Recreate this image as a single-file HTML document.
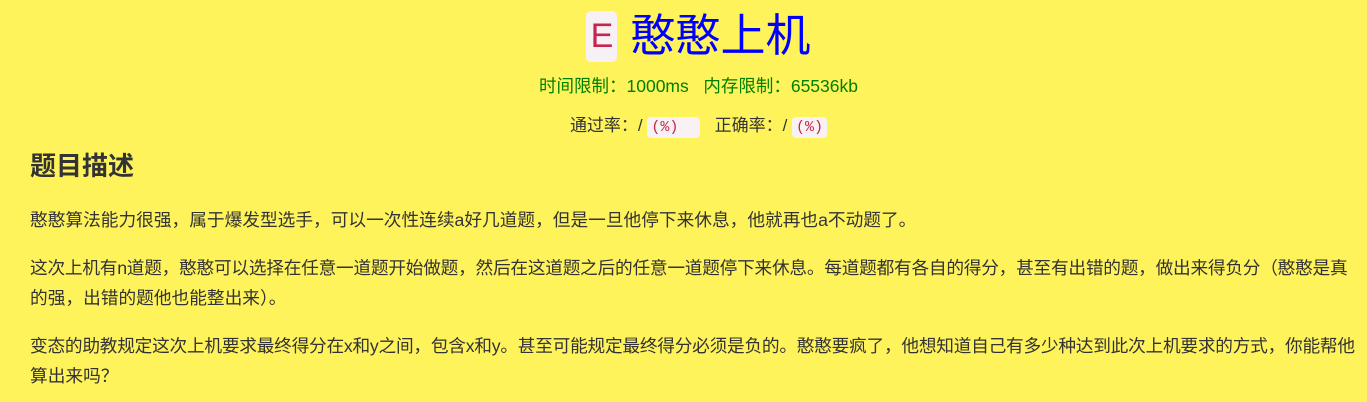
<!DOCTYPE html>
<html><head><meta charset="utf-8"><style>
body{margin:0;background:#fff35c;font-family:"Liberation Sans","Noto Sans CJK SC",sans-serif;color:#333;width:1367px;height:402px;overflow:hidden;position:relative}
.t{position:absolute;left:15px;width:1367px;text-align:center}
.badge{display:inline-block;background:#f7f1f5;color:#c7254e;border-radius:5px;font-size:34px;width:31px;height:51px;line-height:51px;text-align:center;vertical-align:middle;margin-right:13px}
.title{font-size:45px;color:#0000ff;vertical-align:middle}
code{font-family:"Liberation Mono","Noto Sans CJK SC",monospace;background:#f9f2f4;color:#c7254e;border-radius:4px;padding:2px 4px;font-size:15px}
p{position:absolute;left:30px;margin:0;font-size:17.7px;line-height:30px;white-space:nowrap}
.s{letter-spacing:-0.25px}
</style></head><body>
<div class="t" style="top:8px;height:56px;line-height:56px"><span class="badge">E</span><span class="title">憨憨上机</span></div>
<div class="t" style="top:73px;font-size:17.5px;color:#008000">时间限制：1000ms&nbsp;&nbsp;&nbsp;内存限制：65536kb</div>
<div class="t" style="top:111px;font-size:17px">通过率：/ <code>(%)&nbsp;&nbsp;</code>&nbsp;&nbsp;&nbsp;正确率：/ <code>(%)</code></div>
<div style="position:absolute;left:30px;top:146px;font-size:26px;font-weight:bold;color:#333">题目描述</div>
<div style="position:absolute;left:30px;right:0;top:187px;border-top:1px solid #f4ec8a"></div>
<p style="top:205px">憨憨算法能力很强，属于爆发型选手，可以一次性连续a好几道题，但是一旦他停下来休息，他就再也a不动题了。</p>
<p style="top:253px"><span class="s">这次上机有n道题，憨憨可以选择在任意一道题开始做题，然后在这道题之后的任意一道题停下来休息。每道题都有各自的得分，甚至有出错的题，做出来得负分（憨憨是真</span><br>的强，出错的题他也能整出来）。</p>
<p style="top:331px"><span class="s">变态的助教规定这次上机要求最终得分在x和y之间，包含x和y。甚至可能规定最终得分必须是负的。憨憨要疯了，他想知道自己有多少种达到此次上机要求的方式，你能帮他</span><br>算出来吗？</p>
</body></html>
